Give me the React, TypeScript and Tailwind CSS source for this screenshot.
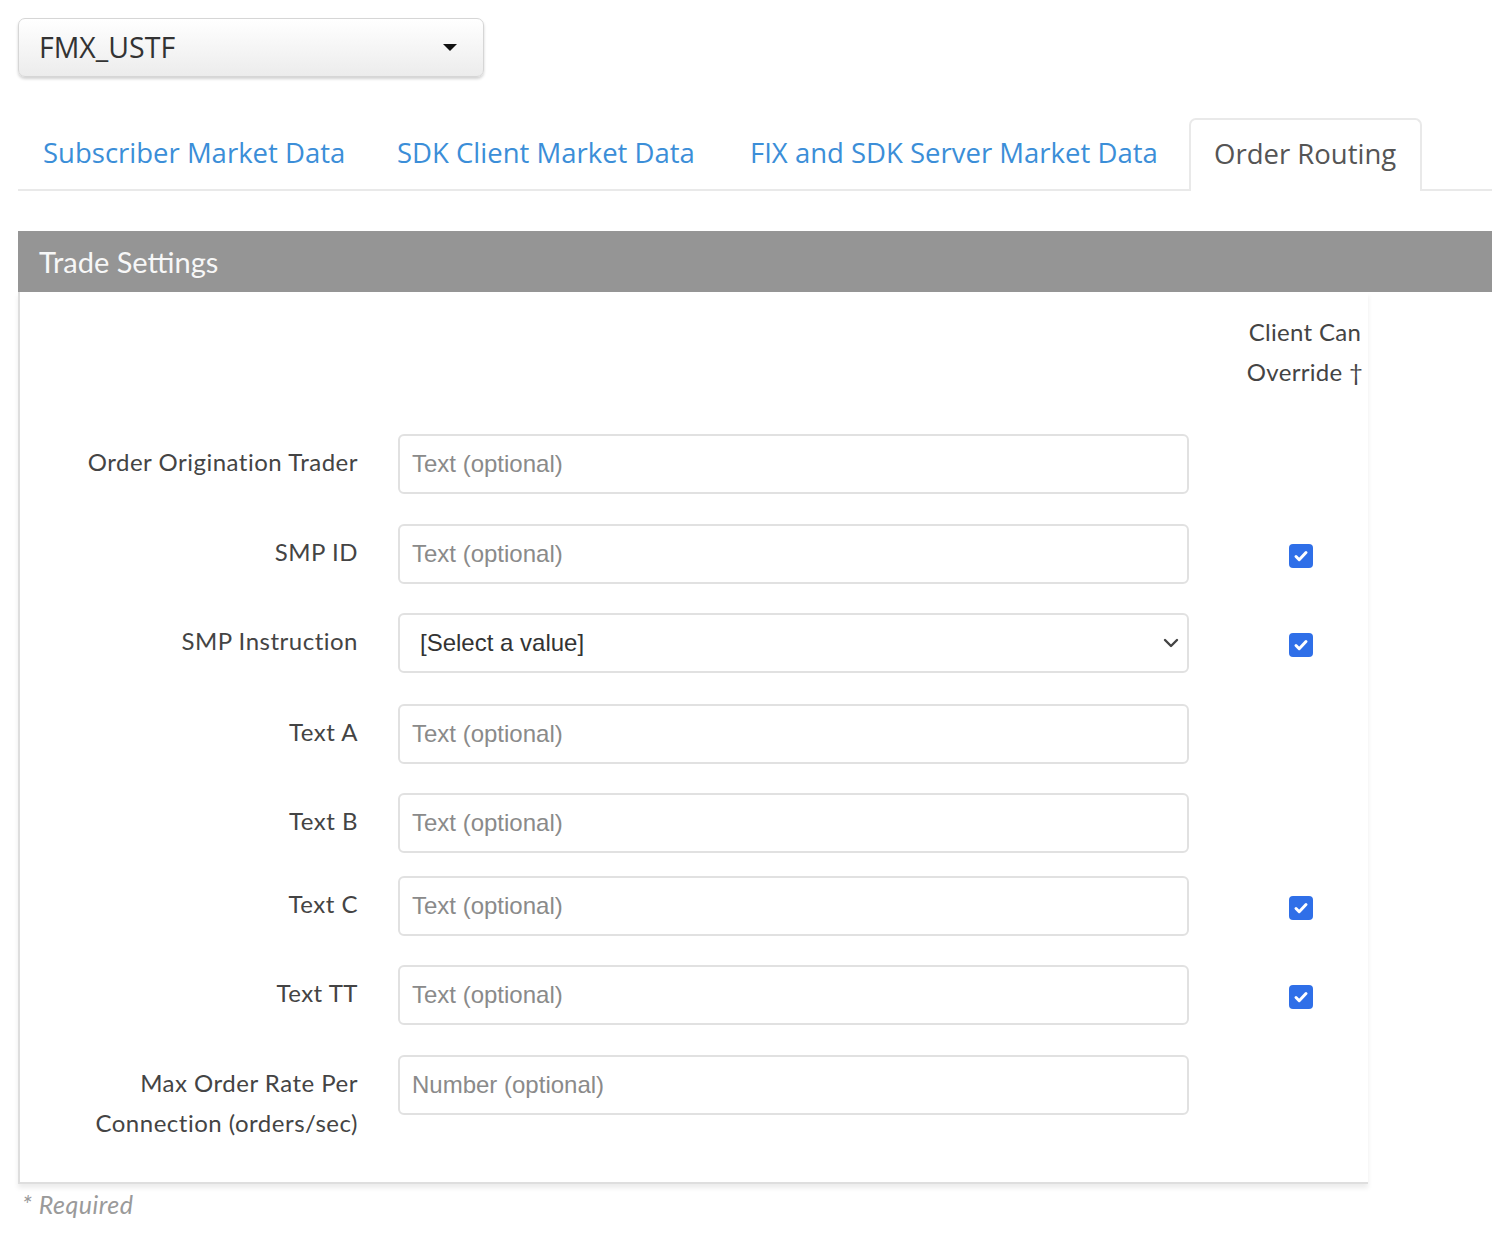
import React from "react";

const rows = [
  { label: ["Order Origination Trader"], kind: "text", ph: "Text (optional)", check: false, space: "mt-0" },
  { label: ["SMP ID"], kind: "text", ph: "Text (optional)", check: true, space: "mt-[30px]" },
  { label: ["SMP Instruction"], kind: "select", ph: "[Select a value]", check: true, space: "mt-[29px]" },
  { label: ["Text A"], kind: "text", ph: "Text (optional)", check: false, space: "mt-[31px]" },
  { label: ["Text B"], kind: "text", ph: "Text (optional)", check: false, space: "mt-[29px]" },
  { label: ["Text C"], kind: "text", ph: "Text (optional)", check: true, space: "mt-[23px]" },
  { label: ["Text TT"], kind: "text", ph: "Text (optional)", check: true, space: "mt-[29px]" },
  { label: ["Max Order Rate Per", "Connection (orders/sec)"], kind: "text", ph: "Number (optional)", check: false, space: "mt-[30px]" },
];

const tabs = [
  { name: "Subscriber Market Data", w: "w-[351px]", pl: "pl-[25px]" },
  { name: "SDK Client Market Data", w: "w-[353px]", pl: "pl-[28px]" },
  { name: "FIX and SDK Server Market Data", w: "w-[467px]", pl: "pl-[28px]" },
];

function CheckBox() {
  return (
    <span className="flex h-[24px] w-[24px] items-center justify-center rounded-[4px] bg-[#2f6fe8]">
      <svg width="16" height="16" viewBox="0 0 16 16" fill="none">
        <path d="M3 8.5l3.2 3.2L13 4.5" stroke="white" strokeWidth="3" strokeLinecap="round" strokeLinejoin="round" />
      </svg>
    </span>
  );
}

export default function App() {
  return (
    <div className="relative h-[1240px] w-[1492px] overflow-hidden bg-white">
      {/* Instrument picker */}
      <div className="pl-[18px] pt-[18px]">
        <div className="flex h-[59px] w-[466px] items-center justify-between rounded-[7px] border border-[#d6d6d6] bg-gradient-to-b from-white to-[#ececec] pl-[20px] pr-[26px] shadow-[0_2px_3px_rgba(0,0,0,0.18)]">
          <span className="text-[28.5px] text-[#333] [font-family:'Open_Sans',sans-serif]">FMX_USTF</span>
          <svg width="14" height="8" viewBox="0 0 14 8">
            <path d="M0 0h14L7 7z" fill="#111" />
          </svg>
        </div>
      </div>

      {/* Tabs */}
      <div className="ml-[18px] mt-[41px] flex h-[73px] items-stretch border-b-2 border-[#e9e9e9]">
        {tabs.map((t) => (
          <div key={t.name} className={`flex shrink-0 items-center pb-[2px] ${t.w} ${t.pl}`}>
            <span className="text-[27.5px] text-[#3b8ed8] [font-family:'Open_Sans',sans-serif]">{t.name}</span>
          </div>
        ))}
        <div className="-mb-[2px] flex w-[233px] shrink-0 items-center rounded-t-[7px] border-2 border-b-0 border-[#e9e9e9] bg-white pb-[4px] pl-[23px]">
          <span className="text-[27.5px] text-[#555] [font-family:'Open_Sans',sans-serif]">Order Routing</span>
        </div>
      </div>

      {/* Panel */}
      <div className="ml-[18px] mt-[40px]">
        <div className="flex h-[61px] items-center bg-[#959595] pl-[21px]">
          <span className="text-[29px] text-[#f7f7f7] [font-family:Lato,sans-serif]">Trade Settings</span>
        </div>
        <div className="w-[1350px] border-b-2 border-l-2 border-[#dedede] pb-[39px] pt-[20px] shadow-[0_4px_5px_rgba(0,0,0,0.08)] [font-family:Lato,sans-serif]">
          <div className="flex">
            <div className="w-[1222px] shrink-0" />
            <div className="w-[126px] shrink-0 text-center text-[24px] leading-[40px] tracking-[0.3px] text-[#444]">
              Client Can
              <br />
              Override †
            </div>
          </div>

          <div className="mt-[42px]">
            {rows.map((r) => (
              <div key={r.label.join(" ")} className={`flex items-start ${r.space}`}>
                <div className="w-[338px] shrink-0 pt-[8px] text-right text-[24px] leading-[40px] tracking-[0.5px] text-[#444]">
                  {r.label.map((l) => (
                    <div key={l}>{l}</div>
                  ))}
                </div>
                <div className="ml-[40px] flex h-[60px] w-[791px] shrink-0 items-center justify-between rounded-[6px] border-2 border-[#e1e1e1] bg-white pl-[12px] pr-[14px] [font-family:'Liberation_Sans',Arial,sans-serif]">
                  {r.kind === "select" ? (
                    <>
                      <span className="pl-[8px] text-[24px] text-[#333]">{r.ph}</span>
                      <svg className="-mr-[6px]" width="16" height="10" viewBox="0 0 16 10" fill="none">
                        <path d="M2 2l6 6 6-6" stroke="#444" strokeWidth="2.4" strokeLinecap="round" strokeLinejoin="round" />
                      </svg>
                    </>
                  ) : (
                    <span className="text-[24px] text-[#8a8a8a]">{r.ph}</span>
                  )}
                </div>
                <div className="flex h-[60px] w-[177px] shrink-0 items-center pl-[100px] pt-[4px]">
                  {r.check ? <CheckBox /> : null}
                </div>
              </div>
            ))}
          </div>
        </div>
      </div>

      <div className="ml-[22px] mt-[2px] text-[25px] italic tracking-[0.5px] text-[#9a9a9a] [font-family:Lato,sans-serif]">* Required</div>
    </div>
  );
}
